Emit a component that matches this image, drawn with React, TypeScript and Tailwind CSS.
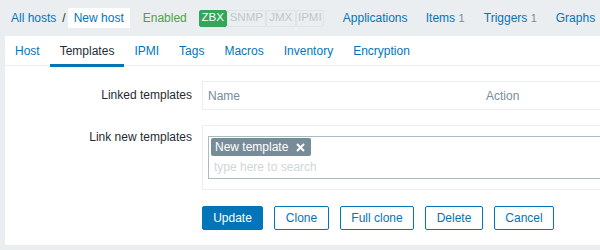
import React from "react";

const font = { fontFamily: '"Liberation Sans", Arial, sans-serif' };

export default function App() {
  const tabs = ["Host", "Templates", "IPMI", "Tags", "Macros", "Inventory", "Encryption"];
  const badge = "h-[17px] shrink-0 flex items-center justify-center text-[11.5px] text-[#bcc7cd] border border-[#dfe4e7] rounded-[2px]";
  const btn = "h-[24px] border border-[#0275b8] text-[#0275b8] rounded-[2px] shrink-0";
  return (
    <div className="w-[600px] h-[250px] bg-[#ebeef0] overflow-hidden text-[12px] text-[#1f2c33]" style={font}>
      {/* header */}
      <div className="h-[36px] flex items-center pl-[11px] whitespace-nowrap">
        <span className="shrink-0 text-[#0275b8]">All hosts</span>
        <span className="shrink-0 ml-[6px] text-[#1f2c33]">/</span>
        <span className="shrink-0 ml-[2px] bg-white px-[6px] h-[20px] flex items-center text-[#0275b8]">New host</span>
        <span className="shrink-0 ml-[13px] text-[#4ea147]">Enabled</span>
        <div className="ml-[12px] flex items-center h-[17px] shrink-0">
          <span className="w-[28px] h-[17px] shrink-0 flex items-center justify-center text-[11.5px] bg-[#34a65c] text-white rounded-[2px] border border-[#34a65c]">ZBX</span>
          <span className={badge + " w-[39px]"}>SNMP</span>
          <span className={badge + " w-[30px]"}>JMX</span>
          <span className={badge + " w-[28px]"}>IPMI</span>
        </div>
        <span className="ml-[19px] w-[83px] shrink-0 text-[#0275b8]">Applications</span>
        <span className="w-[58px] shrink-0 text-[#0275b8]">Items <span className="text-[#768d99] text-[11px]">1</span></span>
        <span className="w-[72px] shrink-0 text-[#0275b8]">Triggers <span className="text-[#768d99] text-[11px]">1</span></span>
        <span className="shrink-0 text-[#0275b8]">Graphs</span>
      </div>
      {/* panel */}
      <div className="ml-[5px] bg-white h-[209px]">
        <div className="flex h-[30px] border-b border-[#ebeef0] whitespace-nowrap">
          {tabs.map((t) => (
            <div
              key={t}
              className={
                "px-[10px] flex items-center h-[30px] relative " +
                (t === "Templates" ? "text-[#1f2c33]" : "text-[#0275b8]")
              }
            >
              {t}
              {t === "Templates" && <div className="absolute left-0 right-0 bottom-[-1px] h-[3px] bg-[#0275b8]" />}
            </div>
          ))}
        </div>
        <div className="pt-[15px]">
          <div className="flex">
            <div className="w-[197px] text-right pt-[5px] pr-[10px] shrink-0">Linked templates</div>
            <div className="w-[420px] h-[29px] border border-[#ebeef0] flex items-center text-[#768d99] shrink-0">
              <span className="pl-[5px] w-[283px]">Name</span>
              <span>Action</span>
            </div>
          </div>
          <div className="flex mt-[15px]">
            <div className="w-[197px] text-right pt-[3px] pr-[10px] shrink-0">Link new templates</div>
            <div className="w-[420px] h-[65px] border border-[#ebeef0] pt-[10px] pl-[5px] shrink-0">
              <div className="w-[420px] h-[43px] border border-[#acbbc2] pl-[2px] pt-[1px]">
                <div className="inline-flex items-center h-[18px] bg-[#768d99] text-white rounded-[2px] pl-[4px] pr-[6px]">
                  New template
                  <svg width="9" height="9" viewBox="0 0 9 9" className="ml-[8px]">
                    <path d="M1 1 L8 8 M8 1 L1 8" stroke="white" strokeWidth="2" />
                  </svg>
                </div>
                <div className="pl-[3px] mt-[2px] text-[#cfd6da]">type here to search</div>
              </div>
            </div>
          </div>
          <div className="flex ml-[197px] mt-[16px] gap-[11px]">
            <button className="h-[24px] w-[61px] shrink-0 bg-[#0275b8] border border-[#0275b8] text-white rounded-[2px]">Update</button>
            <button className={btn + " w-[55px]"}>Clone</button>
            <button className={btn + " w-[74px]"}>Full clone</button>
            <button className={btn + " w-[58px]"}>Delete</button>
            <button className={btn + " w-[60px]"}>Cancel</button>
          </div>
        </div>
      </div>
    </div>
  );
}
